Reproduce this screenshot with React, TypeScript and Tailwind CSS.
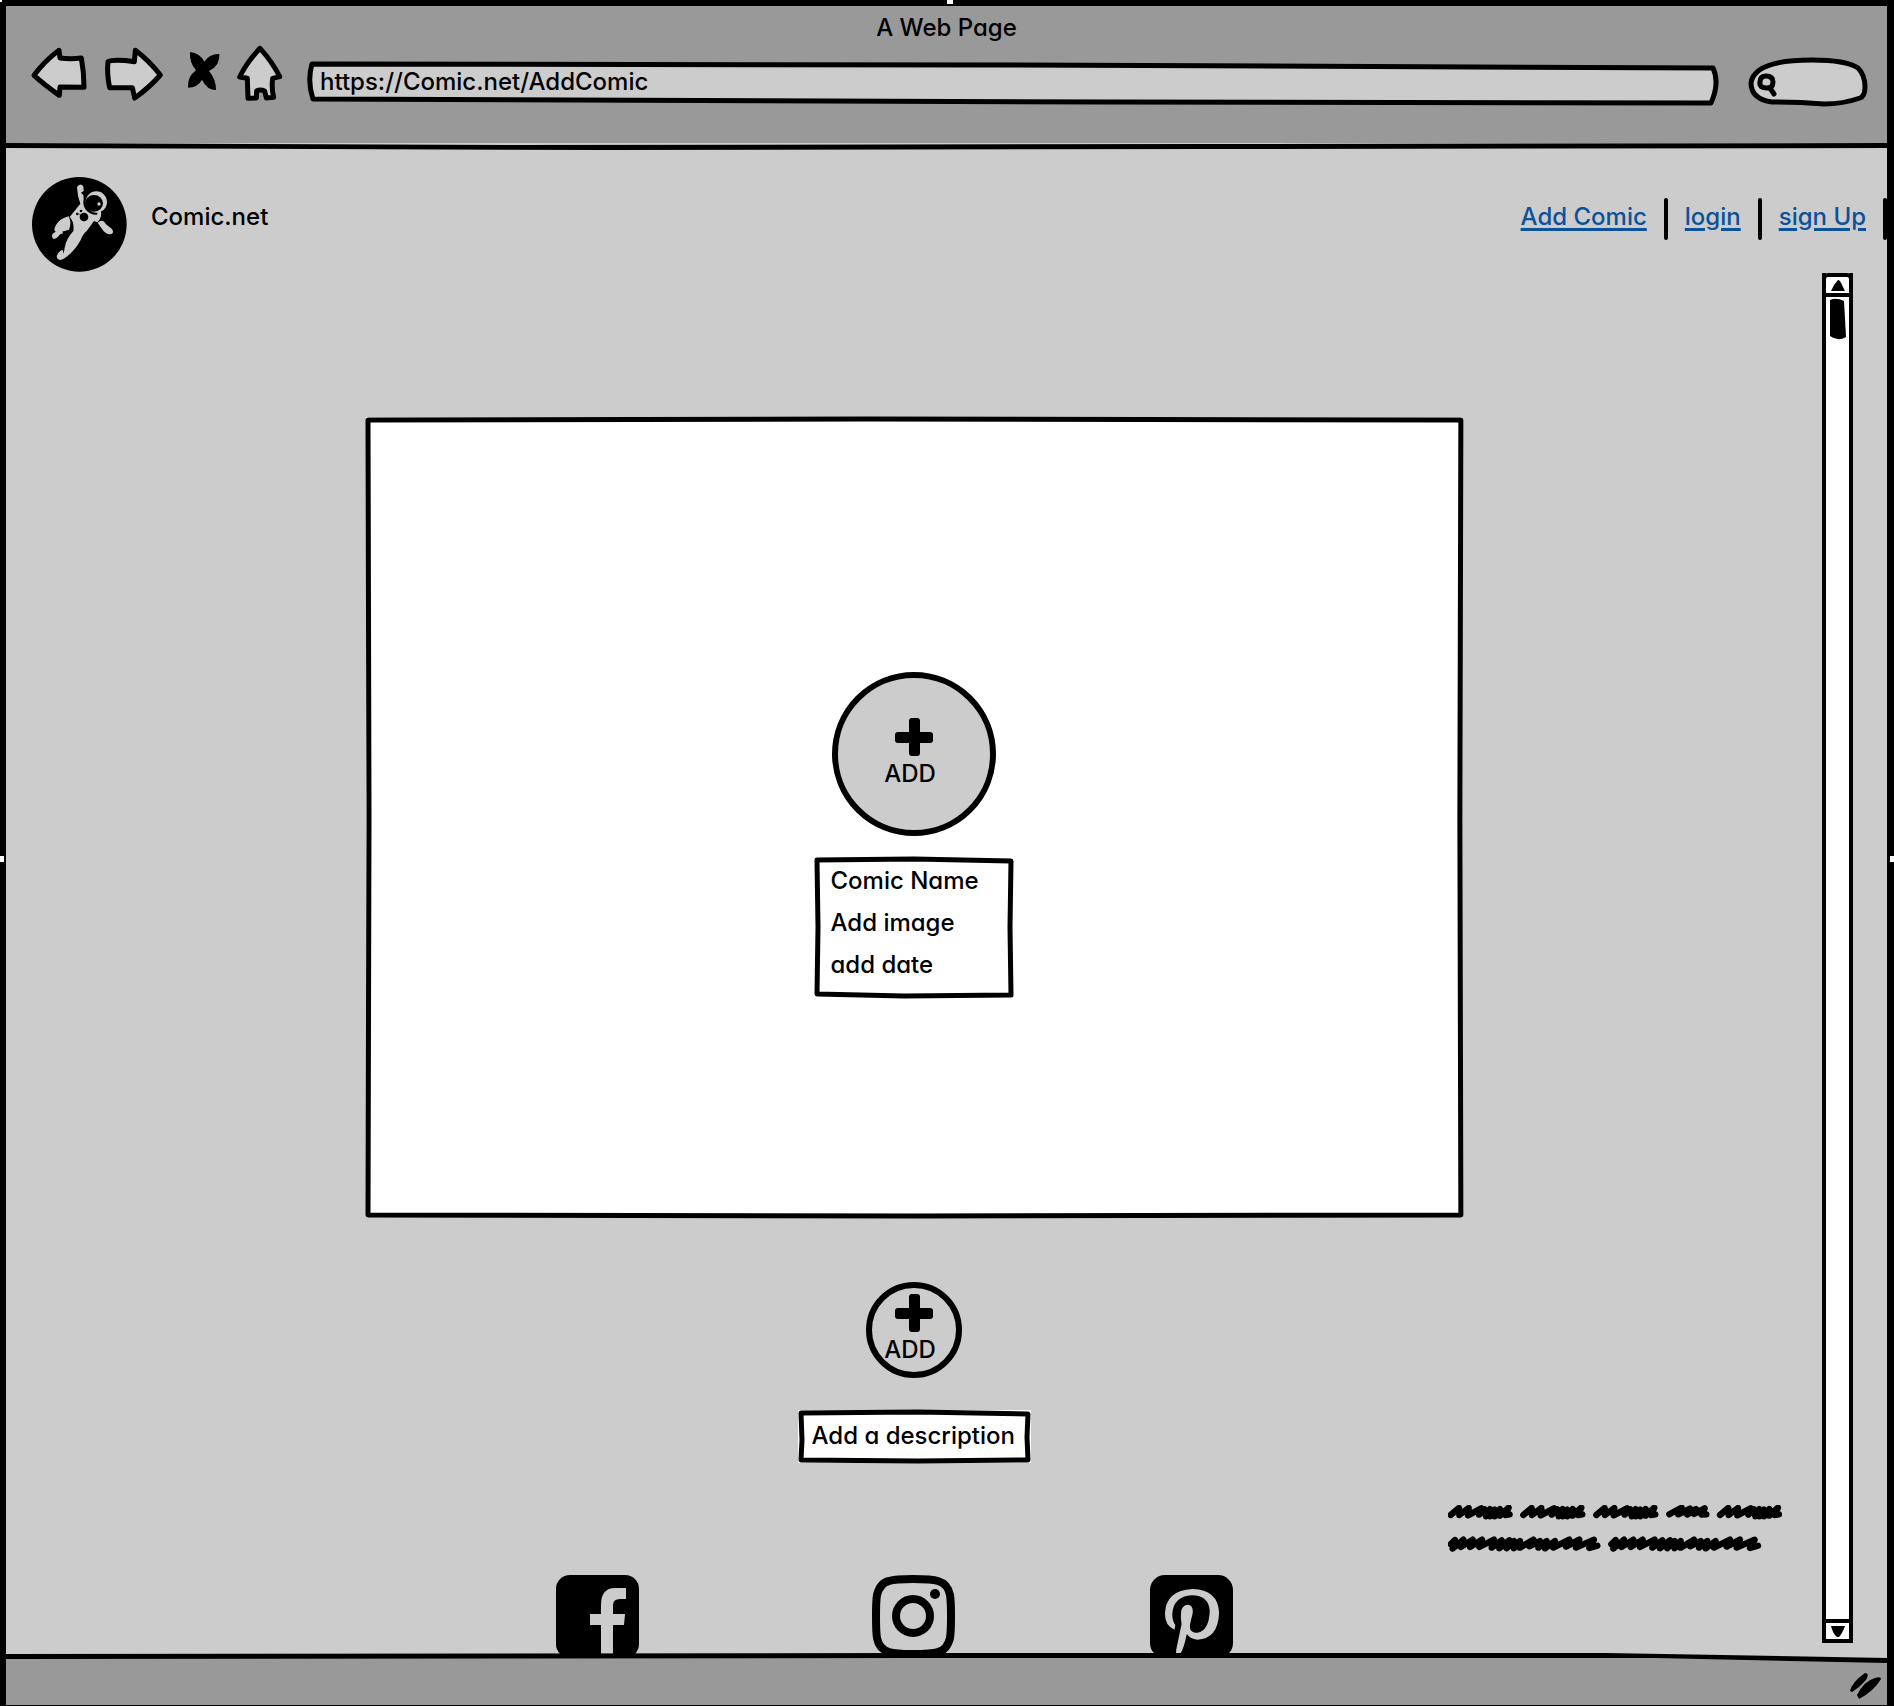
import type { ReactNode } from "react";

type FrameProps = { box: string; d: string; fill: string; width?: number };

/* Wobbly pen outline that stretches over its parent. */
function Sketch({ box, d, fill, width = 5 }: FrameProps) {
  return (
    <svg
      aria-hidden="true"
      viewBox={box}
      preserveAspectRatio="none"
      className="pointer-events-none absolute inset-0 h-full w-full overflow-visible"
    >
      <path
        d={d}
        fill={fill}
        stroke="#000"
        strokeWidth={width}
        strokeLinejoin="round"
        vectorEffect="non-scaling-stroke"
      />
    </svg>
  );
}

function ToolButton({ label, box, className, children }: { label: string; box: string; className: string; children: ReactNode }) {
  return (
    <button type="button" aria-label={label} className={className}>
      <svg viewBox={box} className="h-full w-full" fill="#ccc" stroke="#000" strokeWidth="15" strokeLinejoin="round" strokeLinecap="round">
        {children}
      </svg>
    </button>
  );
}

function Toolbar() {
  return (
    <div className="flex items-start pr-5 pl-6">
      <ToolButton label="Back" box="30 30 174 171" className="h-[57px] w-[58px] shrink-0">
        <path d="M42 121Q74 78 117 46L120 69Q152 73 184 69Q192 112 192 157L120 156L118 181Q74 150 42 121Z" />
      </ToolButton>
      <ToolButton label="Forward" box="252 30 180 171" className="ml-4 h-[57px] w-[60px] shrink-0">
        <path d="M264 80Q280 72 343 80L346 46Q386 76 421 120Q388 158 344 189L337 158L269 158Q260 116 264 80Z" />
      </ToolButton>
      <ToolButton label="Stop" box="498 30 108 171" className="ml-[22px] h-[57px] w-9 shrink-0">
        <path
          stroke="none"
          fill="#000"
          d="M510 51Q540 54 553 80Q568 56 598 57Q601 92 567 108Q588 132 588 165Q561 165 546 134Q533 158 504 158Q502 125 528 106Q508 84 510 51Z"
        />
      </ToolButton>
      <ToolButton label="Home" box="648 30 144 171" className="ml-[14px] h-[57px] w-12 shrink-0">
        <path d="M720 40Q757 80 779 125L758 130Q754 160 761 187L739 189L734 168Q720 162 710 168L709 189L684 190L682 130L659 126Q680 82 720 40Z" />
      </ToolButton>
      <div className="relative mt-4 ml-6 h-11 min-w-0 flex-1">
        <Sketch box="0 0 1411 44" fill="#ccc" d="M4 3L700 4L1406 7Q1413 22 1404 42L800 41L5 38Q-1 20 4 3Z" />
        <input
          aria-label="Address"
          defaultValue="https://Comic.net/AddComic"
          className="relative h-10 w-full bg-transparent px-3 outline-none"
        />
      </div>
      <div className="relative mt-3 ml-[30px] h-[49px] w-[119px] shrink-0">
        <Sketch
          box="0 0 119 49"
          fill="#ccc"
          d="M64 3Q98 3 110 11Q117 18 117 30Q117 39 112 41Q95 47 76 47Q50 45 24 45Q3 42 3 26Q6 3 64 3Z"
        />
        <svg aria-hidden="true" viewBox="0 0 32 49" className="pointer-events-none absolute top-0 left-0 h-full w-8" fill="none" stroke="#000" strokeWidth="5" strokeLinecap="round">
          <path d="M12 25Q12 19 18 19Q25 19 25 25Q25 31 19 31Q11 31 12 25ZM22 31L26 37" />
        </svg>
        <input type="search" aria-label="Search" className="relative h-full w-full bg-transparent pr-3 pl-8 outline-none" />
      </div>
    </div>
  );
}

function Astronaut() {
  return (
    <svg viewBox="36 36 285 285" role="img" aria-label="Comic.net logo" className="h-[95px] w-[95px] shrink-0" fill="#ccc">
      <circle cx="178" cy="178" r="142" fill="#000" />
      <path d="M171 66Q180 52 190 64L191 78L183 83L190 90L193 120Q212 148 243 142Q246 158 232 172L222 168L200 198Q190 205 182 225Q162 262 130 282Q112 290 110 274Q114 260 128 254L131 266L134 248Q138 222 160 198Q164 172 149 156L181 116L174 92Z" />
      <path d="M146 154Q156 175 147 194L126 200L130 205L120 208Q112 221 101 222Q93 216 98 206L107 200Q100 196 106 184Q118 160 146 154Z" />
      <path d="M233 173Q248 160 258 178L276 192Q284 205 272 208Q256 208 246 192Z" />
      <circle cx="227" cy="112" r="37" fill="#000" />
      <circle cx="229" cy="111" r="32" />
      <ellipse cx="222" cy="115" rx="27" ry="25" fill="#000" />
      <circle cx="237" cy="117" r="5" />
      <path d="M232 142L243 136L243 152L232 160Z" />
      <g fill="#000">
        <circle cx="192" cy="156" r="13" />
        <circle cx="183" cy="138" r="4" />
        <circle cx="172" cy="147" r="4" />
        <circle cx="180" cy="148" r="2" />
      </g>
    </svg>
  );
}

const links = ["Add Comic", "login", "sign Up"];

function SiteHeader() {
  return (
    <header className="flex items-start justify-between pt-[29px] pb-px pl-[26px]">
      <div className="flex items-start gap-6">
        <Astronaut />
        <span className="mt-6">Comic.net</span>
      </div>
      <nav className="mt-[21px] flex items-center gap-[17px]">
        {links.map((label) => (
          <div key={label} className="flex items-center gap-[17px]">
            <a href="#" className="pb-1 text-[#0b5299] underline decoration-3 underline-offset-3">
              {label}
            </a>
            <span className="h-[42px] w-1 rounded-sm bg-black" />
          </div>
        ))}
      </nav>
    </header>
  );
}

function AddButton({ className }: { className: string }) {
  return (
    <button type="button" className={className}>
      <svg aria-hidden="true" viewBox="0 0 38 38" className="h-[38px] w-[38px] shrink-0">
        <rect x="14" y="0" width="11" height="38" rx="3" />
        <rect x="0" y="14" width="38" height="11" rx="3" />
      </svg>
      <span className="mt-0.5 pr-2">ADD</span>
    </button>
  );
}

const SHORT = "M32 62L57 41L58 62L86 41L84 63L124 42L117 61L134 45L138 66L150 44L150 66L164 46L164 66L180 44L180 64L206 40L196 62L209 60";
const TINY = "M688 60L725 40L715 60L750 43L742 61L768 44L762 59L794 42L785 61L799 60";
const LONG =
  "M32 150L45 137L38 163L70 136L62 158L98 136L90 158L126 136L118 158L162 136L155 160L185 138L178 162L208 138L200 162L222 140L222 162L240 140L240 160L280 136L268 156L300 140L295 160L320 140L315 162L345 140L340 160L388 136L378 157L418 136L408 160L462 136L448 161L472 154";

function Scribbles() {
  return (
    <svg
      role="img"
      aria-label="Scribbled footer note"
      viewBox="24 32 1002 141"
      className="mt-[42px] mr-10 h-[47px] w-[334px] self-end"
      fill="none"
      stroke="#000"
      strokeWidth="19"
      strokeLinecap="round"
      strokeLinejoin="round"
    >
      <path d={SHORT} />
      <path d={SHORT} transform="translate(218 0)" />
      <path d={SHORT} transform="translate(437 0)" />
      <path d={TINY} />
      <path d={SHORT} transform="translate(808 0)" />
      <path d={LONG} />
      <path d={LONG} transform="translate(482 0)" />
    </svg>
  );
}

function Social() {
  return (
    <div className="mt-[23px] -mb-1 flex h-[83px] pr-10">
      <a href="#" aria-label="Facebook">
        <svg viewBox="0 0 83 83" className="h-[83px] w-[83px]">
          <rect width="83" height="83" rx="14" />
          <path fill="#ccc" d="M45 83V50H34V39H45V30Q45 13 59 13H70V24H64Q57 24 57 30V39H69L68 50H57V83Z" />
        </svg>
      </a>
      <a href="#" aria-label="Instagram" className="ml-[233px]">
        <svg viewBox="0 0 83 83" className="h-[83px] w-[83px]" fill="none" stroke="#000" strokeWidth="8">
          <path d="M41 4Q60 4 66 6Q76 9 78 20Q79 26 79 41Q79 57 78 63Q75 75 66 77Q60 79 41 79Q23 79 17 77Q7 74 5 63Q4 57 4 41Q4 26 5 20Q8 8 17 6Q23 4 41 4Z" />
          <circle cx="41" cy="41" r="17" />
          <circle cx="63" cy="19" r="5" fill="#000" stroke="none" />
        </svg>
      </a>
      <a href="#" aria-label="Pinterest" className="ml-[195px]">
        <svg viewBox="27 30 250 250" className="h-[83px] w-[83px]">
          <rect x="27" y="30" width="250" height="250" rx="45" />
          <path
            fill="#ccc"
            d="M103 180L101 195Q72 184 72 147Q74 76 155 72Q233 74 235 145Q232 221 170 225Q148 223 138 208Q129 252 118 268L110 280Q102 268 108 245L122 178Q118 158 121 138Q126 119 145 120Q159 124 155 148Q145 182 148 193Q154 206 170 204Q205 198 207 138Q204 92 153 91Q97 94 94 148Q94 168 103 180Z"
          />
        </svg>
      </a>
    </div>
  );
}

function ScrollBar() {
  return (
    <div className="mr-[34px] mb-[11px] flex w-[31px] shrink-0 flex-col items-center border-x-4 border-black bg-white">
      <button type="button" aria-label="Scroll up" className="relative flex h-6 w-[31px] items-center justify-center rounded-t-md border-4 border-black bg-white">
        <svg viewBox="0 0 14 11" className="h-[11px] w-[14px]">
          <path d="M0 11Q3 4 7 0Q9 0 11 5L14 11Z" />
        </svg>
      </button>
      <div className="w-full flex-1 pt-px">
        <svg aria-hidden="true" viewBox="0 0 23 42" className="h-[42px] w-full">
          <path d="M4 2Q10 -1 18 3L20 39Q12 44 4 38Z" />
        </svg>
      </div>
      <button type="button" aria-label="Scroll down" className="flex h-6 w-[31px] items-center justify-center rounded-b-sm border-4 border-black bg-white">
        <svg viewBox="0 0 14 11" className="h-[11px] w-[14px]">
          <path d="M0 0H14Q11 8 8 11H6Q2 8 0 0Z" />
        </svg>
      </button>
    </div>
  );
}

const fields = ["Comic Name", "Add image", "add date"];

export default function App() {
  return (
    <div className="relative flex min-h-screen flex-col border-t-6 border-r-7 border-b border-l-6 border-black bg-[#ccc] font-['Inter',sans-serif] text-2xl font-medium text-black [font-feature-settings:'cv11']">
      <span className="absolute -top-1.5 left-1/2 h-1 w-1.5 bg-white" />
      <span className="absolute -top-1.5 -left-1.5 h-0.5 w-0.5 bg-white" />
      <span className="absolute top-1/2 -left-1.5 h-1.5 w-1 bg-white" />
      <span className="absolute top-1/2 -right-[7px] h-1.5 w-1 bg-white" />

      <div className="bg-[#999] pb-[37px]">
        <h1 className="pt-1.5 pb-px text-center">A Web Page</h1>
        <Toolbar />
      </div>
      <svg aria-hidden="true" viewBox="0 0 1881 5" preserveAspectRatio="none" className="h-[5px] w-full overflow-visible">
        <path d="M0 0L500 2L1200 1L1881 0V5L1200 6L600 7L0 5Z" />
      </svg>

      <SiteHeader />

      <div className="flex flex-1">
        <main className="flex flex-1 flex-col items-center pt-36">
          <section className="relative flex w-[60.4%] flex-col items-center bg-white pt-[255px] pb-[219px]">
            <Sketch box="0 0 1096 799" fill="none" d="M2 3L500 2L1094 3L1093 400L1094 797L550 798L2 797L3 400Z" />
            <AddButton className="relative flex h-[164px] w-[164px] flex-col items-center rounded-full border-6 border-black bg-[#ccc] pt-10" />
            <ul className="relative mt-[21px] w-[199px] bg-white pt-[3px] pb-3">
              <Sketch box="0 0 199 141" fill="none" d="M3 3L100 2L197 4L196 70L197 138L90 139L3 137L4 70Z" />
              {fields.map((name) => (
                <li key={name}>
                  <button type="button" className="relative h-[42px] w-full pl-4 text-left">
                    {name}
                  </button>
                </li>
              ))}
            </ul>
          </section>

          <AddButton className="mt-[65px] flex h-24 w-24 flex-col items-center rounded-full border-6 border-black pt-1.5" />

          <div className="relative mt-8 w-[233px] bg-white">
            <Sketch box="0 0 233 53" fill="none" d="M3 3L120 2L230 4L229 27L230 50L120 51L3 50L4 30Z" />
            <input
              aria-label="Add a description"
              placeholder="Add a description"
              className="relative block h-[53px] w-full bg-transparent px-3.5 pb-[3px] outline-none placeholder:text-black"
            />
          </div>

          <Scribbles />
          <Social />
        </main>
        <ScrollBar />
      </div>

      <footer className="relative flex h-[51px] flex-col bg-[#999]">
        <svg aria-hidden="true" viewBox="0 0 1881 11" preserveAspectRatio="none" className="h-[11px] w-full overflow-visible">
          <path fill="#ccc" d="M1600 0H1881V6Z" />
          <path d="M0 0L900 -1L1600 -1L1881 4V9L1650 4L900 4L0 5Z" />
        </svg>
        <svg aria-hidden="true" viewBox="0 0 31 26" className="mt-2 mr-1.5 h-[26px] w-[31px] self-end">
          <path d="M0 18Q2 9 15 0Q20 0 16 7Q10 14 2 19ZM7 22Q14 8 25 5Q31 3 31 6Q24 18 9 26Z" />
        </svg>
      </footer>
    </div>
  );
}
